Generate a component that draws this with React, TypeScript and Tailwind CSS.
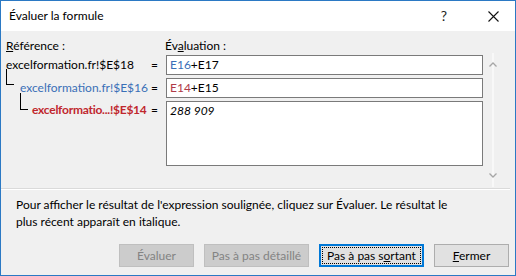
const font = { fontFamily: 'Lato, "Open Sans", sans-serif' };

const Button = ({
  children,
  width,
  disabled,
  focused,
}: {
  children: React.ReactNode;
  width: string;
  disabled?: boolean;
  focused?: boolean;
}) => {
  if (disabled) {
    return (
      <div
        className={`flex h-[23px] ${width} items-center justify-center border border-[#bfbfbf] bg-[#cccccc] text-[#838383]`}>
        {children}
      </div>
    );
  }
  if (focused) {
    return (
      <div
        className={`flex h-[23px] ${width} items-center justify-center border-2 border-[#0078d7] bg-[#e1e1e1] p-[1px] text-black`}>
        <div className="flex h-full w-full items-center justify-center border border-dotted border-black">
          {children}
        </div>
      </div>
    );
  }
  return (
    <div
      className={`flex h-[23px] ${width} items-center justify-center border border-[#adadad] bg-[#e1e1e1] text-black`}>
      {children}
    </div>
  );
};

export default function App() {
  return (
    <div
      className="flex h-[276px] w-[516px] flex-col border border-[#2b79c4] bg-[#f0f0f0] text-[12px] leading-[16px] text-black"
      style={font}>
      {/* title bar */}
      <div className="flex h-[30px] shrink-0 items-center bg-white">
        <span className="pl-[8px] text-[12px]">Évaluer la formule</span>
        <span className="ml-auto mr-[41px] text-[14px] text-[#222]">?</span>
        <svg className="mr-[16px]" width="11" height="11" viewBox="0 0 11 11">
          <path d="M0.5 0.5 L10.5 10.5 M10.5 0.5 L0.5 10.5" stroke="#111" strokeWidth="1.1" />
        </svg>
      </div>

      {/* main area */}
      <div className="flex pt-[7px]">
        <div className="flex w-[483px] flex-col">
          <div className="flex h-[16px]">
            <span className="w-[164px] pl-[5px]">
              <span className="underline">R</span>éférence :
            </span>
            <span>
              Év<span className="underline">a</span>luation :
            </span>
          </div>

          <div className="mt-[1px] flex h-[20px] items-center">
            <span className="w-[150px] pl-[5px]">excelformation.fr!$E$18</span>
            <span className="w-[15px]">=</span>
            <div className="flex h-[20px] w-[317px] items-center border border-[#7a7a7a] bg-white pl-[3px]">
              <span className="text-[#3a6fb7]">E16</span>+E17
            </div>
          </div>

          <div className="relative mt-[3px] flex h-[20px] items-center">
            <span className="w-[150px] pl-[19px] text-[#3a6fb7]">excelformation.fr!$E$16</span>
            <span className="w-[15px]">=</span>
            <div className="flex h-[20px] w-[317px] items-center border border-[#7a7a7a] bg-white pl-[3px]">
              <span className="text-[#b03a48]">E14</span>+E15
            </div>
            <div className="absolute left-[5px] top-[-9px] h-[16px] w-[8px] border-b border-l border-black" />
          </div>

          <div className="relative mt-[3px] flex h-[65px] items-start">
            <span className="mt-[1px] w-[150px] pl-[31px] font-bold tracking-[-0.25px] text-[#c0272d]">
              excelformatio...!$E$14
            </span>
            <span className="mt-[1px] w-[15px]">=</span>
            <div className="h-[65px] w-[317px] border border-[#7a7a7a] bg-white pl-[3px] pt-[1px] italic">
              288 909
            </div>
            <div className="absolute left-[19px] top-[-8px] h-[17px] w-[8px] border-b border-l border-black" />
          </div>
        </div>

        {/* scrollbar */}
        <div className="relative ml-[1px] mt-[15px] flex h-[134px] w-[16px] flex-col items-center justify-between py-[9px]">
          <div className="absolute left-[7px] top-0 h-full w-[2px] bg-[#f8f8f8]" />
          <svg className="relative" width="8" height="5" viewBox="0 0 8 5">
            <path d="M0.5 4.5 L4 1 L7.5 4.5" stroke="#a6a6a6" strokeWidth="1.3" fill="none" />
          </svg>
          <svg className="relative" width="8" height="5" viewBox="0 0 8 5">
            <path d="M0.5 0.5 L4 4 L7.5 0.5" stroke="#a6a6a6" strokeWidth="1.3" fill="none" />
          </svg>
        </div>
      </div>

      {/* separator */}
      <div className="mt-[1px] w-[509px] border-t border-[#dadada]" />
      <div className="w-[509px] border-t border-white" />

      {/* help text */}
      <p className="mt-[6px] w-[460px] pl-[15px] leading-[17px]">
        Pour afficher le résultat de l'expression soulignée, cliquez sur Évaluer. Le résultat le plus récent apparaît en
        italique.
      </p>

      {/* buttons */}
      <div className="mb-[8px] mt-auto flex justify-end gap-[10px] pr-[6px]">
        <Button width="w-[75px]" disabled>
          Évaluer
        </Button>
        <Button width="w-[105px]" disabled>
          Pas à pas détaillé
        </Button>
        <Button width="w-[105px]" focused>
          <span>
            Pas à pas s<span className="underline">o</span>rtant
          </span>
        </Button>
        <Button width="w-[75px]">
          <span>
            <span className="underline">F</span>ermer
          </span>
        </Button>
      </div>
    </div>
  );
}
